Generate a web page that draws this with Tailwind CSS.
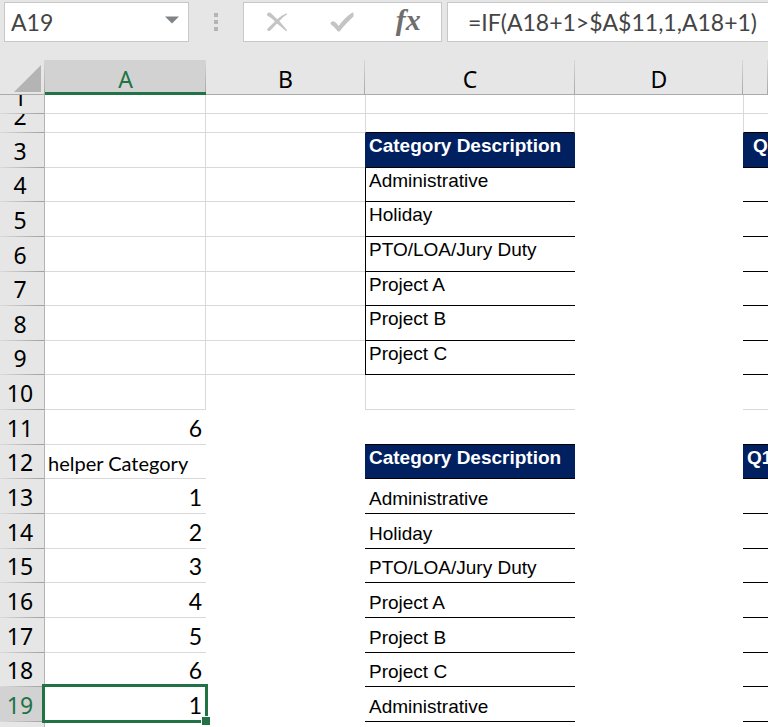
<!DOCTYPE html>
<html lang="en">
<head>
  <meta charset="UTF-8" />
  <meta name="viewport" content="width=device-width, initial-scale=1.0"/>
  <title>Category helper | Sheet</title>
  <script src="https://cdn.jsdelivr.net/npm/@tailwindcss/browser@4"></script>
</head>

<body class="bg-white text-black min-h-screen overflow-hidden">

  <!-- Formula bar -->
  <header class="flex h-[60px] items-start overflow-hidden bg-[#e6e6e6] pl-1 pt-0.5 font-['Lato',sans-serif] text-[23px] text-[#444]">
    <div class="flex h-10 w-[185px] shrink-0 items-center border border-[#c8c8c8] bg-white pl-1.5 pr-2">
      <input type="text" aria-label="Name box" value="A19" class="w-full min-w-0 flex-1 outline-none">
      <button type="button" aria-label="Open name list" class="flex h-8 w-4 items-center justify-center pb-1">
        <svg class="h-2 w-3.5" viewBox="0 0 14 8" fill="#808486"><path d="M0 0.5H14L7 7.5Z"/></svg>
      </button>
    </div>

    <div class="flex h-10 w-[54px] shrink-0 flex-col items-center justify-center gap-[3px]">
      <span class="size-1 bg-[#b4b4b4]"></span>
      <span class="size-1 bg-[#b4b4b4]"></span>
      <span class="size-1 bg-[#b4b4b4]"></span>
    </div>

    <div class="grid h-10 w-[199px] shrink-0 grid-cols-3 border border-[#c8c8c8] bg-white">
      <button type="button" aria-label="Cancel" class="flex items-center justify-center">
        <svg class="h-5 w-[22px]" viewBox="0 0 22 20" fill="#c4c4c4"><path d="M1.2 1.8C2 .4 3.600 .2 5 1.200L11.300 7.200C14 4.800 17 2.600 20.800 1.200L21.200 2.200C18.300 4 15.600 6.400 13.300 9.100C15.800 11.900 18.200 14.900 21.200 18.500L20.200 19.200C17 16.700 14 14 11 11.500C8.600 14.100 6.400 16.500 4 18.700C2.700 19.700 .9 18.600 1.200 17C3.600 14.300 6.300 11.700 8.900 9.400C6.700 7.300 4.200 5.100 1.800 4C1 3.400 .9 2.500 1.200 1.800Z"/></svg>
      </button>
      <button type="button" aria-label="Enter" class="flex items-center justify-center">
        <svg class="h-5 w-6" viewBox="0 0 24 20" fill="#c4c4c4"><path d="M.7 12.200C-.1 10.500 2.400 8.700 4 9.600C5.800 10.500 7.300 12.100 8.600 14C12.300 8.900 16.700 4.200 22 .8L23.500 .6V4.600C18.600 9 14 13.800 9.800 19.200C9.100 19.800 8 19.700 7.400 18.900C5.400 16.300 3.400 14 .7 12.200Z"/></svg>
      </button>
      <button type="button" aria-label="Insert function" class="flex items-center justify-center pb-1 font-['Liberation_Serif',serif] text-[30px] leading-8 font-bold italic text-[#6e6e6e]">fx</button>
    </div>

    <div class="ml-[5px] flex h-10 min-w-[322px] flex-1 items-center border border-[#c8c8c8] bg-white pl-5">
      <input type="text" aria-label="Formula" value="=IF(A18+1&gt;$A$11,1,A18+1)" class="w-full min-w-0 outline-none">
    </div>
  </header>

  <table class="w-full table-fixed border-separate border-spacing-0 whitespace-nowrap
      [&_th]:p-0 [&_th]:font-['Noto_Sans','Open_Sans',sans-serif] [&_th]:text-[23px] [&_th]:leading-6 [&_th]:font-normal
      [&_td]:overflow-hidden [&_td]:border-[#d9d9d9] [&_td]:p-0 [&_td]:align-bottom
      [&_td]:font-['Liberation_Sans',sans-serif] [&_td]:text-[19px] [&_td]:leading-[22px]">
    <colgroup>
      <col class="w-[45px]">
      <col class="w-[161px]">
      <col class="w-[159px]">
      <col class="w-[210px]">
      <col class="w-[168px]">
      <col>
    </colgroup>

    <thead class="[&_th]:h-[35px] [&_th]:border-b [&_th]:border-[#ababab] [&_th]:bg-[#e6e6e6] [&_th]:bg-[linear-gradient(to_bottom,#d8d8d8,#a6a6a6)] [&_th]:bg-[length:1px_100%] [&_th]:bg-right [&_th]:bg-no-repeat [&_th]:pt-[3px]">
      <tr>
        <th aria-label="Select all">
          <svg class="ml-3.5 h-7 w-[27px]" viewBox="0 0 27 28" fill="#b4b4b4"><path d="M27 0V27H0Z"/></svg>
        </th>
        <th scope="col" class="border-b-3! border-[#217346]! bg-[#d2d2d2]! pt-[5px]! text-[#217346]">A</th>
        <th scope="col">B</th>
        <th scope="col">C</th>
        <th scope="col">D</th>
        <th scope="col" aria-label="E"></th>
      </tr>
    </thead>

    <tbody class="[&_th]:border-r [&_th]:border-[#b4b4b4] [&_th]:bg-[#e6e6e6] [&_th]:bg-[linear-gradient(to_right,#dadada,#a0a0a0)] [&_th]:bg-[length:100%_1px] [&_th]:bg-bottom [&_th]:bg-no-repeat [&_th]:pr-1 [&_th]:pb-[5px] [&_th]:align-bottom
        [&_td:nth-child(2)]:border-b [&_td:nth-child(2)]:pr-1 [&_td:nth-child(2)]:pb-0.5 [&_td:nth-child(2)]:text-right [&_td:nth-child(2)]:font-['Lato',sans-serif] [&_td:nth-child(2)]:text-[23px] [&_td:nth-child(2)]:leading-7
        [&_td:nth-child(4)]:pl-[3px]">
      <tr class="h-[19px]">
        <th scope="row"><div class="flex h-3.5 items-end justify-center overflow-hidden">1</div></th>
        <td class="border-r"></td>
        <td class="border-b"></td>
        <td class="border-x border-b"></td>
        <td class="border-b"></td>
        <td class="border-b border-l"></td>
      </tr>
      <tr class="h-[19px]">
        <th scope="row"><div class="flex h-3.5 items-end justify-center overflow-hidden">2</div></th>
        <td class="border-r"></td>
        <td class="border-b"></td>
        <td class="border-x border-b border-b-black!"></td>
        <td></td>
        <td class="border-b border-l border-b-black!"></td>
      </tr>
      <tr class="h-[35px]">
        <th scope="row">3</th>
        <td class="border-r"></td>
        <td class="border-b"></td>
        <td class="border-b border-l border-b-black! border-l-[#002060]! bg-[#002060] pt-0.5! align-top! font-bold text-white">Category Description</td>
        <td></td>
        <td class="border-b border-black! bg-[#002060] pt-0.5! pl-2.5! align-top! font-bold text-white">Q</td>
      </tr>
      <tr class="h-[34px]">
        <th scope="row">4</th>
        <td class="border-r"></td>
        <td class="border-b"></td>
        <td class="border-b border-l border-black! pt-0.5! align-top!">Administrative</td>
        <td></td>
        <td class="border-b border-black!"></td>
      </tr>
      <tr class="h-[35px]">
        <th scope="row">5</th>
        <td class="border-r"></td>
        <td class="border-b"></td>
        <td class="border-b border-l border-black! pt-0.5! align-top!">Holiday</td>
        <td></td>
        <td class="border-b border-black!"></td>
      </tr>
      <tr class="h-[35px]">
        <th scope="row">6</th>
        <td class="border-r"></td>
        <td class="border-b"></td>
        <td class="border-b border-l border-black! pt-0.5! align-top!">PTO/LOA/Jury Duty</td>
        <td></td>
        <td class="border-b border-black!"></td>
      </tr>
      <tr class="h-[34px]">
        <th scope="row">7</th>
        <td class="border-r"></td>
        <td class="border-b"></td>
        <td class="border-b border-l border-black! pt-0.5! align-top!">Project A</td>
        <td></td>
        <td class="border-b border-black!"></td>
      </tr>
      <tr class="h-[35px]">
        <th scope="row">8</th>
        <td class="border-r"></td>
        <td class="border-b"></td>
        <td class="border-b border-l border-black! pt-0.5! align-top!">Project B</td>
        <td></td>
        <td class="border-b border-black!"></td>
      </tr>
      <tr class="h-[34px]">
        <th scope="row">9</th>
        <td class="border-r"></td>
        <td class="border-b"></td>
        <td class="border-b border-l border-black! pt-0.5! align-top!">Project C</td>
        <td></td>
        <td class="border-b border-black!"></td>
      </tr>
      <tr class="h-[35px]">
        <th scope="row">10</th>
        <td class="border-r"></td>
        <td></td>
        <td class="border-b border-l"></td>
        <td></td>
        <td class="border-b"></td>
      </tr>
      <tr class="h-[35px]">
        <th scope="row">11</th>
        <td>6</td>
        <td></td>
        <td class="border-b border-black!"></td>
        <td></td>
        <td class="border-b border-black!"></td>
      </tr>
      <tr class="h-[34px]">
        <th scope="row">12</th>
        <td class="pl-[3px]! pb-px! text-left! text-[20px]!">helper Category</td>
        <td></td>
        <td class="border-b border-l border-b-black! border-l-[#002060]! bg-[#002060] pt-0.5! align-top! font-bold text-white">Category Description</td>
        <td></td>
        <td class="border-b border-black! bg-[#002060] pt-0.5! pl-1! align-top! font-bold text-white">Q1</td>
      </tr>
      <tr class="h-[35px]">
        <th scope="row">13</th>
        <td>1</td>
        <td></td>
        <td class="border-b border-black! pl-1! pb-[3px]!">Administrative</td>
        <td></td>
        <td class="border-b border-black!"></td>
      </tr>
      <tr class="h-[35px]">
        <th scope="row">14</th>
        <td>2</td>
        <td></td>
        <td class="border-b border-black! pl-1! pb-[3px]!">Holiday</td>
        <td></td>
        <td class="border-b border-black!"></td>
      </tr>
      <tr class="h-[34px]">
        <th scope="row">15</th>
        <td>3</td>
        <td></td>
        <td class="border-b border-black! pl-1! pb-[3px]!">PTO/LOA/Jury Duty</td>
        <td></td>
        <td class="border-b border-black!"></td>
      </tr>
      <tr class="h-[35px]">
        <th scope="row">16</th>
        <td>4</td>
        <td></td>
        <td class="border-b border-black! pl-1! pb-[3px]!">Project A</td>
        <td></td>
        <td class="border-b border-black!"></td>
      </tr>
      <tr class="h-[35px]">
        <th scope="row">17</th>
        <td>5</td>
        <td></td>
        <td class="border-b border-black! pl-1! pb-[3px]!">Project B</td>
        <td></td>
        <td class="border-b border-black!"></td>
      </tr>
      <tr class="h-[34px]">
        <th scope="row">18</th>
        <td>6</td>
        <td></td>
        <td class="border-b border-black! pl-1! pb-[3px]!">Project C</td>
        <td></td>
        <td class="border-b border-black!"></td>
      </tr>
      <tr class="h-[35px]">
        <th scope="row" class="bg-[#d2d2d2]! text-[#217346]">19</th>
        <!-- active cell, with the fill handle in its corner -->
        <td class="relative overflow-visible!">1
          <span class="absolute -top-[3px] -right-0.5 -bottom-0.5 -left-[3px] border-3 border-[#217346]"></span>
          <span class="absolute -right-1 -bottom-1 size-[9px] border-t border-l border-white bg-[#217346]"></span>
        </td>
        <td></td>
        <td class="border-b border-black! pl-1! pb-[3px]!">Administrative</td>
        <td></td>
        <td class="border-b border-black!"></td>
      </tr>
      <tr class="h-[5px]">
        <th scope="row" aria-label="20" class="bg-none! pb-0!"></th>
        <td class="border-b-0! pb-0!"></td>
        <td></td>
        <td></td>
        <td></td>
        <td></td>
      </tr>
    </tbody>
  </table>

</body>
</html>
